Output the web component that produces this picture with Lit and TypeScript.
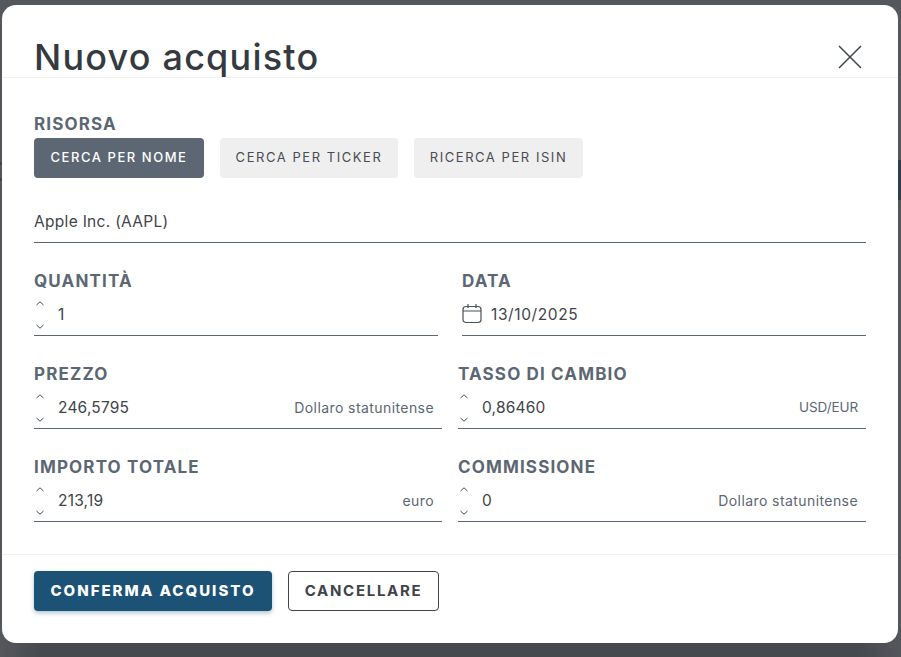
import { LitElement, html, css } from "lit";
import { customElement } from "lit/decorators.js";

const FONT = css`Inter, "Noto Sans", sans-serif`;

@customElement("app-root")
export class AppRoot extends LitElement {
  static styles = css`
    :host {
      display: block;
      width: 901px;
      height: 657px;
      overflow: hidden;
      font-family: ${FONT};
      background-color: #54575c;
      background-image:
        linear-gradient(to bottom, transparent 160px, #2e3e4a 160px, #2e3e4a 200px, transparent 200px),
        linear-gradient(to bottom, transparent 162px, #3c4448 162px, #3c4448 165px, transparent 165px, transparent 178px, #3c4448 178px, #3c4448 181px, transparent 181px),
        linear-gradient(to right, #54585c 0, #46494d 40px, #46494d 860px, #54585c 901px);
      background-size: 3px 100%, 2px 100%, 100% 30px;
      background-position: right top, left top, left bottom;
      background-repeat: no-repeat;
      box-sizing: border-box;
      padding: 5px 3px 14px 2px;
    }
    * { box-sizing: border-box; }
    .modal {
      height: 638px;
      background: #fff;
      border-radius: 14px;
      display: flex;
      flex-direction: column;
    }
    .head {
      height: 73px;
      border-bottom: 1px solid #f0f0f0;
      padding: 0 36px 0 32px;
      display: flex;
      justify-content: space-between;
      align-items: flex-start;
    }
    h1 {
      margin: 29px 0 0;
      font-size: 36px;
      line-height: 46px;
      font-weight: 500;
      color: #343a40;
      letter-spacing: 1.2px;
      height: 43px;
    }
    .close { display: block; margin-top: 40px; width: 24px; height: 24px; }
    .body {
      height: 477px;
      padding: 36px 32px 0;
      border-bottom: 1px solid #f0f0f0;
    }
    label {
      display: block;
      font-size: 17px;
      line-height: 20px;
      font-weight: 700;
      letter-spacing: 1.15px;
      color: #5c6773;
      text-transform: uppercase;
    }
    .tabs { display: flex; gap: 16px; margin-top: 4px; }
    .tab {
      height: 40px;
      padding-bottom: 2px;
      border-radius: 4px;
      display: flex;
      align-items: center;
      justify-content: center;
      font-size: 13px;
      font-weight: 400;
      letter-spacing: 1.55px;
      background: #efefef;
      color: #484d53;
      text-transform: uppercase;
    }
    .tab.on { background: #5c6773; color: #fff; font-weight: 500; }
    .w1 { width: 170px; }
    .w2 { width: 178px; }
    .w3 { width: 169px; }
    .resource {
      margin-top: 31px;
      height: 34px;
      border-bottom: 1px solid #5c6773;
      display: flex;
      align-items: center;
      font-size: 15.5px;
      color: #3f444a;
      padding-bottom: 8px;
      letter-spacing: 0.3px;
    }
    .grid { display: grid; margin-top: 28px; }
    .g1 { grid-template-columns: 404px 404px; column-gap: 24px; }
    .g2 { grid-template-columns: 408px 408px; column-gap: 16px; }
    .field-line {
      height: 45px;
      border-bottom: 1px solid #5c6773;
      display: flex;
      align-items: center;
      font-size: 15.5px;
      color: #3f444a;
      letter-spacing: 0.2px;
      padding: 0 8px 0 0;
    }
    .spin {
      width: 12px;
      height: 30px;
      margin: 4px 12px 0 0;
      display: flex;
      flex-direction: column;
      justify-content: space-between;
      flex: none;
    }
    .spin svg { display: block; }
    .val { flex: 1; margin-top: 2px; }
    .date { letter-spacing: 0.6px; }
    .unit { font-size: 14px; color: #5c6773; letter-spacing: 0.42px; margin-top: 2px; }
    .unit.code { font-size: 13.5px; letter-spacing: -0.1px; }
    .cal { display: block; margin-right: 8px; flex: none; }
    .foot {
      display: flex;
      gap: 16px;
      padding: 16px 32px 0;
    }
    .btn {
      height: 40px;
      padding-bottom: 2px;
      border-radius: 4px;
      display: flex;
      align-items: center;
      justify-content: center;
      font-size: 15px;
      font-weight: 800;
      letter-spacing: 2px;
      text-transform: uppercase;
    }
    .primary {
      width: 238px;
      background: #1b5276;
      color: #fff;
      box-shadow: 0 2px 4px rgba(27, 82, 118, 0.35);
    }
    .secondary {
      width: 151px;
      background: #fff;
      color: #3f444a;
      font-weight: 700;
      letter-spacing: 1.7px;
      border: 1px solid #3f444a;
    }
  `;

  private spin() {
    return html`<span class="spin">
      <svg width="12" height="7" viewBox="0 0 12 7" fill="none" stroke="#4a5058" stroke-width="1"><path d="M2.5 5 L6 1.8 L9.5 5"/></svg>
      <svg width="12" height="7" viewBox="0 0 12 7" fill="none" stroke="#4a5058" stroke-width="1"><path d="M2.5 2 L6 5.2 L9.5 2"/></svg>
    </span>`;
  }

  private num(labelText: string, value: string, unit: string, code = false) {
    return html`<div>
      <label>${labelText}</label>
      <div class="field-line">
        ${this.spin()}<span class="val">${value}</span>
        ${unit ? html`<span class="unit ${code ? "code" : ""}">${unit}</span>` : ""}
      </div>
    </div>`;
  }

  render() {
    return html`<div class="modal">
      <div class="head">
        <h1>Nuovo acquisto</h1>
        <svg class="close" viewBox="0 0 24 24" fill="none" stroke="#3f444a" stroke-width="1.5">
          <path d="M1 1 L23 23 M23 1 L1 23"/>
        </svg>
      </div>
      <div class="body">
        <label>Risorsa</label>
        <div class="tabs">
          <div class="tab on w1">Cerca per nome</div>
          <div class="tab w2">Cerca per ticker</div>
          <div class="tab w3">Ricerca per ISIN</div>
        </div>
        <div class="resource">Apple Inc. (AAPL)</div>
        <div class="grid g1">
          ${this.num("Quantità", "1", "")}
          <div>
            <label>Data</label>
            <div class="field-line">
              <svg class="cal" width="21" height="21" viewBox="0 0 21 21" fill="none" stroke="#4a5058" stroke-width="1.2">
                <rect x="1" y="3.5" width="18" height="16" rx="3"/>
                <path d="M1 8 H19 M6 1 V5 M14 1 V5"/>
              </svg>
              <span class="val date">13/10/2025</span>
            </div>
          </div>
        </div>
        <div class="grid g2">
          ${this.num("Prezzo", "246,5795", "Dollaro statunitense")}
          ${this.num("Tasso di cambio", "0,86460", "USD/EUR", true)}
        </div>
        <div class="grid g2">
          ${this.num("Importo totale", "213,19", "euro")}
          ${this.num("Commissione", "0", "Dollaro statunitense")}
        </div>
      </div>
      <div class="foot">
        <div class="btn primary">Conferma acquisto</div>
        <div class="btn secondary">Cancellare</div>
      </div>
    </div>`;
  }
}
